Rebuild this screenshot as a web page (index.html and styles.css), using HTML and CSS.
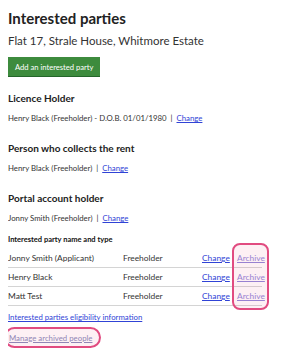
FILE: index.html
```html
<!DOCTYPE html>
<html lang="en">
<head>
    <meta charset="UTF-8">
    <meta name="viewport" content="width=device-width, initial-scale=1.0">
    <title>Interested parties</title>
    <link rel="stylesheet" href="styles.css">
</head>
<body>
    <h1>Interested parties</h1>
    <p class="address">Flat 17, Strale House, Whitmore Estate</p>

    <button type="button" class="add-button">Add an interested party</button>

    <h2 class="first">Licence Holder</h2>
    <p class="detail">Henry Black (Freeholder) - D.O.B. 01/01/1980 <span class="sep">|</span> <a href="#">Change</a></p>

    <h2>Person who collects the rent</h2>
    <p class="detail">Henry Black (Freeholder) <span class="sep">|</span> <a href="#">Change</a></p>

    <h2>Portal account holder</h2>
    <p class="detail">Jonny Smith (Freeholder) <span class="sep">|</span> <a href="#">Change</a></p>

    <div class="parties">
        <table>
            <caption>Interested party name and type</caption>
            <tr>
                <td class="name">Jonny Smith (Applicant)</td>
                <td class="type">Freeholder</td>
                <td class="change"><a href="#">Change </a></td>
                <td class="archive"><a href="#">Archive</a></td>
            </tr>
            <tr>
                <td class="name">Henry Black</td>
                <td class="type">Freeholder</td>
                <td class="change"><a href="#">Change </a></td>
                <td class="archive"><a href="#">Archive</a></td>
            </tr>
            <tr>
                <td class="name">Matt Test</td>
                <td class="type">Freeholder</td>
                <td class="change"><a href="#">Change </a></td>
                <td class="archive"><a href="#">Archive</a></td>
            </tr>
        </table>
        <div class="highlight archive-highlight"></div>
    </div>

    <p class="info-link"><a href="#">Interested parties eligibility information</a></p>
    <p class="manage"><a href="#" class="faded">Manage archived people</a></p>
</body>
</html>
```

FILE: styles.css
```css
body {
    font-family: Lato, "Open Sans", sans-serif;
    margin: 8px;
    color: #333;
    background: #fff;
}
h1 {
    font-size: 15px;
    line-height: 18px;
    font-weight: bold;
    margin: 1px 0 0;
    color: #222;
}
.address {
    font-size: 11.5px;
    line-height: 14px;
    margin: 7px 0 9px;
}
.add-button {
    display: block;
    font-family: inherit;
    font-size: 7.6px;
    line-height: 10px;
    color: #fff;
    background-color: #3d8b3d;
    border: none;
    border-bottom: 1px solid #24662a;
    padding: 5px 7px 4px;
    margin: 0;
    cursor: pointer;
}
h2 {
    font-size: 10px;
    line-height: 12px;
    font-weight: bold;
    margin: 0 0 9px;
    color: #222;
}
h2.first {
    margin-top: 15px;
}
.detail {
    font-size: 7.8px;
    line-height: 10px;
    margin: 0 0 19px;
}
.sep {
    margin: 0 2px;
}
a {
    color: #3043d6;
}
.parties {
    position: relative;
    width: 254px;
    margin-top: -7px;
}
table {
    width: 254px;
    table-layout: fixed;
    border-collapse: collapse;
    font-size: 8.4px;
    line-height: 10px;
}
caption {
    text-align: left;
    font-weight: bold;
    font-size: 7.5px;
    line-height: 10px;
    color: #111;
    padding: 0 0 4px;
}
td {
    border-bottom: 1px solid #d4d4d4;
    padding: 4px 0 4px;
    white-space: nowrap;
}
.name {
    width: 115px;
}
.type {
    width: 79px;
}
.change {
    width: 35px;
}
.archive {
    width: 25px;
}
.archive a {
    color: #8f84d9;
}
.highlight {
    box-sizing: border-box;
    border: 2px solid #e14b80;
    background: rgba(240, 110, 150, 0.1);
    border-radius: 8px;
}
.archive-highlight {
    position: absolute;
    left: 224px;
    top: 8px;
    width: 37px;
    height: 67px;
}
.info-link {
    font-size: 7.8px;
    line-height: 10px;
    margin: 6px 0 5px;
}
.manage {
    font-size: 7.8px;
    line-height: 10px;
    margin: 0;
}
.faded {
    display: inline-block;
    color: #9085b5;
    border: 2px solid #e14b80;
    background: rgba(240, 110, 150, 0.1);
    border-radius: 11px;
    padding: 3.5px 7px 3.5px 3px;
    margin-left: -4px;
}
```
